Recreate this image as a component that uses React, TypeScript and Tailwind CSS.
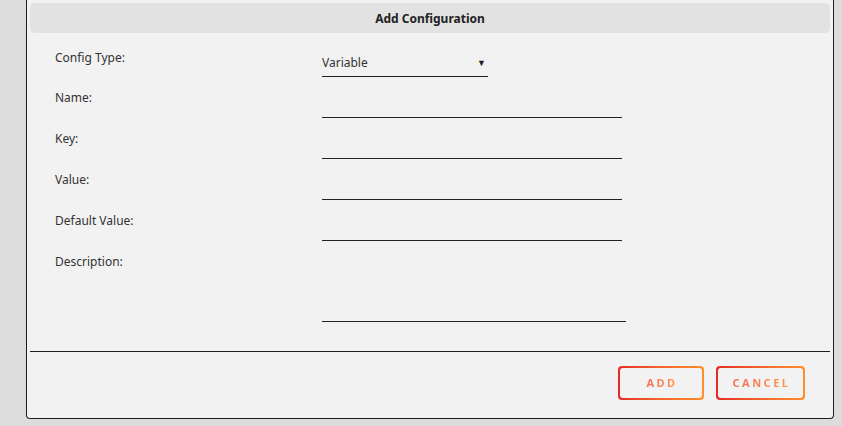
import React from "react";

const fields = ["Name:", "Key:", "Value:", "Default Value:"];

const GradientButton = ({ label, width }: { label: string; width: string }) => (
  <button
    className={`rounded-[4px] bg-gradient-to-r from-[#e42a2a] to-[#ff8f2a] p-[2px] h-[34px] ${width}`}
  >
    <span className="flex h-full w-full items-center justify-center rounded-[3px] bg-[#f2f2f2]">
      <span className="bg-gradient-to-r from-[#f26a55] to-[#ff9a4a] bg-clip-text text-[11px] font-bold tracking-[2.5px] text-transparent pl-[2px]">
        {label}
      </span>
    </span>
  </button>
);

export default function App() {
  return (
    <div
      className="h-[426px] w-full bg-[#dcdcdc] overflow-hidden"
      style={{ fontFamily: "'Noto Sans', 'Open Sans', sans-serif" }}
    >
      <div className="ml-[26px] w-[808px] h-[419px] bg-[#f2f2f2] border-x border-b border-[#1e1e1e] rounded-b-[4px] flex flex-col px-[3px]">
        {/* title bar */}
        <div className="mt-[3px] h-[30px] rounded-[5px] bg-[#e2e2e2] flex items-center justify-center pt-[2px]">
          <span className="text-[12px] font-bold text-[#222]">Add Configuration</span>
        </div>

        {/* form */}
        <div className="pl-[25px] mt-[3px]">
          <div className="flex h-[41px]">
            <div className="w-[267px] pt-[15px] text-[12px] leading-[14px] text-[#333]">Config Type:</div>
            <div className="flex items-end">
              <div className="w-[166px] h-[23px] border-b border-[#222] flex items-start justify-between pr-[2px] pt-[2px]">
                <span className="text-[12px] leading-[14px] text-[#333]">Variable</span>
                <span className="text-[9px] leading-[14px] text-[#222]">▼</span>
              </div>
            </div>
          </div>

          {fields.map((f) => (
            <div key={f} className="flex h-[41px]">
              <div className="w-[267px] pt-[14px] text-[12px] leading-[14px] text-[#333]">{f}</div>
              <div className="flex items-end">
                <div className="w-[300px] h-[20px] border-b border-[#222]" />
              </div>
            </div>
          ))}

          <div className="flex h-[81px]">
            <div className="w-[267px] pt-[14px] text-[12px] leading-[14px] text-[#333]">Description:</div>
            <div className="flex items-end">
              <div className="w-[304px] h-[60px] border-b border-[#222]" />
            </div>
          </div>
        </div>

        <div className="mt-[29px] border-t border-[#1e1e1e]" />

        <div className="flex justify-end gap-[12px] pr-[25px] mt-[14px]">
          <GradientButton label="ADD" width="w-[86px]" />
          <GradientButton label="CANCEL" width="w-[89px]" />
        </div>
      </div>
    </div>
  );
}
